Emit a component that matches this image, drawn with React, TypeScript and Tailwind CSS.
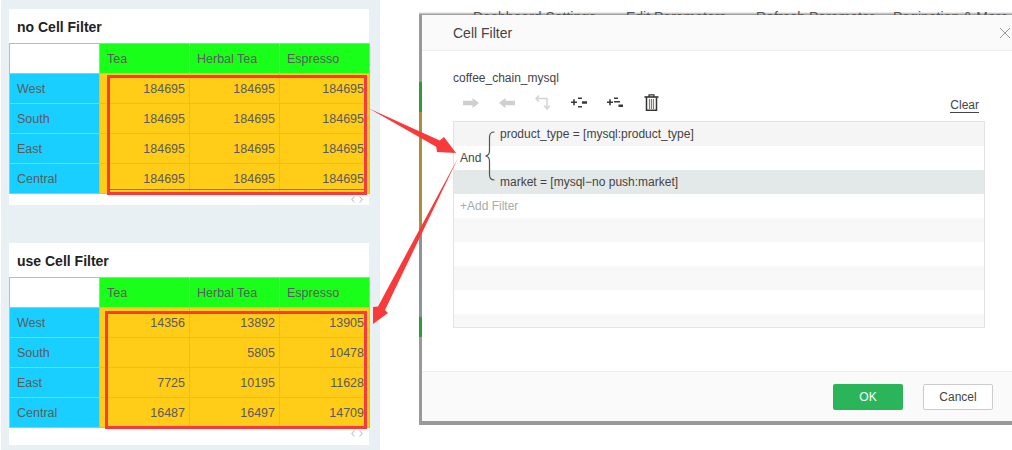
const ff = { font: "font-['Liberation_Sans',Arial,sans-serif]" };

const firstRows = [
  ["West", "184695", "184695", "184695"],
  ["South", "184695", "184695", "184695"],
  ["East", "184695", "184695", "184695"],
  ["Central", "184695", "184695", "184695"],
];

const secondRows = [
  ["West", "14356", "13892", "13905"],
  ["South", "", "5805", "10478"],
  ["East", "7725", "10195", "11628"],
  ["Central", "16487", "16497", "14709"],
];

function ScrollHint() {
  return (
    <svg width="12" height="7" viewBox="0 0 12 7" fill="none" stroke="#b9c4cc" strokeWidth="1.100">
      <path d="M3.500.5.800 3.500l2.700 3M8.500.5l2.700 3-2.700 3" />
    </svg>
  );
}

function DataCard({ title, rows, cardClass }: { title: string; rows: string[][]; cardClass: string }) {
  return (
    <div className={`relative w-[360px] bg-white ${cardClass}`}>
      <div className="h-[34px] pl-2 pt-[10px] text-[14px] leading-4 font-bold text-[#222]">{title}</div>
      <div className="grid w-[361px] grid-cols-[91px_90px_90px_90px] text-[12.5px] text-[#5b5b5b]">
        <div className="h-[31px] border border-[#a9cf8e] bg-white" />
        {["Tea", "Herbal Tea", "Espresso"].map((h) => (
          <div key={h} className="h-[31px] border-y border-r border-[#a9cf8e] bg-[#1aff1a] pl-[7px] leading-[31px]">
            {h}
          </div>
        ))}
        {rows.map((r) => (
          <div key={r[0]} className="contents">
            <div className="h-[30px] border-x border-b border-[#a9cf8e] bg-[#19cfff] pl-[7px] leading-[31px]">{r[0]}</div>
            {r.slice(1).map((v, i) => (
              <div key={i} className="h-[30px] border-r border-b border-[#a9c98e] bg-[#ffcc17] pr-[4px] text-right leading-[31px] last:pr-[5px]">
                {v}
              </div>
            ))}
          </div>
        ))}
      </div>
      <div className="flex justify-end pt-[2px] pr-[6px]">
        <ScrollHint />
      </div>
    </div>
  );
}

function GreyArrow({ flip }: { flip?: boolean }) {
  return (
    <svg width="16" height="10" viewBox="0 0 16 10" className={flip ? "-scale-x-100" : ""}>
      <path d="M0 2.800h9.500V0L16 5l-6.500 5V7.200H0z" fill="#cfcfcf" />
    </svg>
  );
}

function ElbowIcon() {
  return (
    <svg width="16" height="15" viewBox="0 0 16 15" fill="none" stroke="#d2d2d2" strokeWidth="1.400">
      <path d="M4 .5 1 3.500l3 3M1 3.500h11V13M9 10.500l3 3.500 3-3.500" />
    </svg>
  );
}

function IndentIcon({ second }: { second?: boolean }) {
  return (
    <svg width="16" height="11" viewBox="0 0 16 11" fill="#3a3a3a">
      <path d="M0 4.500h2.200V2.300h1.600v2.200H6v1.600H3.800v2.200H2.200V6.100H0z" />
      {second ? (
        <path d="M7 .5h4v1.600H7zM7 4h6v1.600H7zM11.500 7.500H16V10h-4.500z" />
      ) : (
        <path d="M7 .5h4v1.600H7zM11 4.300h5v2.400h-5zM7 9h4v1.600H7z" />
      )}
    </svg>
  );
}

function TrashIcon() {
  return (
    <svg width="16" height="17" viewBox="0 0 16 17" fill="none" stroke="#333" strokeWidth="1.200">
      <path d="M1.500 3h14" strokeWidth="1.600" />
      <path d="M6 3V.8h5V3" />
      <path d="M3.500 3.500v12.800h10V3.500" strokeWidth="1.500" />
      <path d="M6.500 5v10M8.500 5v10M10.500 5v10" stroke="#8b7a6d" strokeWidth="1.200" />
    </svg>
  );
}

function Brace() {
  return (
    <svg width="12" height="50" viewBox="0 0 12 50" fill="none" stroke="#555" strokeWidth="1.200" className="absolute top-[9px] left-[30px]">
      <path d="M10.500 1C7 1 5.500 2.500 5.500 6v14c0 3-1.500 4.500-4 5 2.500.5 4 2 4 5v14c0 3.500 1.500 5 5 5" />
    </svg>
  );
}

function FilterBox() {
  const stripes = ["bg-[#f8f8f8]", "bg-white", "bg-[#f8f8f8]", "bg-white", "bg-[#f8f8f8]"];
  return (
    <div className="relative mr-[27px] ml-[31px] h-[207px] overflow-hidden border border-[#e3e3e3] text-[12px] text-[#444]">
      <div className="h-6 bg-[#f5f5f5] pl-[46px] leading-[25px]">product_type = [mysql:product_type]</div>
      <div className="h-6 bg-white" />
      <div className="h-6 bg-[#e3e8e8] pl-[46px] leading-[25px]">market = [mysql−no push:market]</div>
      <div className="h-6 bg-white pl-[6px] leading-[25px] text-[#aaa]">+Add Filter</div>
      {stripes.map((c, i) => (
        <div key={i} className={`h-6 ${c}`} />
      ))}
      <div className="absolute top-[28px] left-[6px] leading-4">And</div>
      <Brace />
    </div>
  );
}

function CellFilterDialog() {
  return (
    <div className="mt-[10px] ml-[39px] flex h-[415px] w-[593px] flex-col overflow-hidden">
      {/* page behind the dialog, only a few pixels of it show */}
      <div className="relative h-[5px] shrink-0 overflow-hidden bg-gradient-to-b from-white from-40% to-[#8e8e8e] text-[14px] text-[#555]">
        <div className="absolute -top-[3px] left-[54px] flex whitespace-nowrap">
          <span className="w-[153px]">Dashboard Settings</span>
          <span className="w-[130px]">Edit Parameters</span>
          <span className="w-[137px]">Refresh Parameter</span>
          <span>Pagination &amp; More</span>
        </div>
      </div>
      <div className="flex min-h-0 flex-1">
        <div className="flex w-[3px] shrink-0 flex-col bg-[#999]">
          <div className="h-[67px]" />
          <div className="h-[30px] bg-[#2f9a3e]" />
          <div className="h-[123px] bg-[#a88f3c]" />
          <div className="h-[82px] bg-[#8d939a]" />
          <div className="h-5 bg-[#2f9a3e]" />
        </div>
        <div className="flex flex-1 flex-col bg-white">
          <div className="flex h-9 shrink-0 items-center justify-between border-b border-[#eee] bg-[#fafafa] pt-px pl-[31px] text-[14px] text-[#444]">
            <span>Cell Filter</span>
            <svg width="10" height="10" viewBox="0 0 10 10" stroke="#999" strokeWidth="1" className="mr-[2px]">
              <path d="M0 0l10 10M10 0 0 10" />
            </svg>
          </div>
          <div className="min-h-0 flex-1 pt-[19px]">
            <div className="pl-[31px] text-[12px] leading-4 text-[#444]">coffee_chain_mysql</div>
            <div className="mt-[3px] flex h-[27px] items-center gap-[20px] pl-[41px]">
              <GreyArrow />
              <GreyArrow flip />
              <ElbowIcon />
              <IndentIcon />
              <IndentIcon second />
              <TrashIcon />
              <span className="mt-[6px] mr-[33px] ml-auto border-b border-[#444] text-[12px] leading-[14px] text-[#444]">Clear</span>
            </div>
            <div className="mt-[5px]">
              <FilterBox />
            </div>
          </div>
          <div className="flex h-[50px] shrink-0 items-center justify-end gap-5 border-t border-[#eee] bg-[#fafafa] pr-[19px] text-[12px]">
            <button className="h-[26px] w-[70px] rounded-[2px] bg-[#2bb55a] text-white">OK</button>
            <button className="h-[26px] w-[70px] rounded-[2px] border border-[#ccc] bg-white text-[#444]">Cancel</button>
          </div>
          <div className="h-[4px] shrink-0 bg-[#999]" />
        </div>
      </div>
    </div>
  );
}

export default function App() {
  return (
    <div className={`relative flex h-[450px] w-[1012px] overflow-hidden bg-white ${ff.font}`}>
      <div className="ml-px flex h-[450px] w-[379px] shrink-0 flex-col bg-[#e9f0f4] pt-[9px] pl-2">
        <DataCard title="no Cell Filter" rows={firstRows} cardClass="h-[196px]" />
        <div className="mt-[38px]">
          <DataCard title="use Cell Filter" rows={secondRows} cardClass="h-[202px]" />
        </div>
      </div>
      <CellFilterDialog />

      {/* red annotations drawn on top of the screenshot */}
      <div className="absolute top-[75px] left-[107px] h-[120px] w-[260px] border-[3px] border-[#f83a3a]">
        <div className="absolute right-0 bottom-[2px] left-0 h-px bg-[#f83a3a]" />
      </div>
      <div className="absolute top-[311px] left-[105px] h-[118px] w-[262px] border-[3px] border-[#f83a3a]" />
      <svg width="1012" height="450" viewBox="0 0 1012 450" className="absolute top-0 left-0">
        <path d="M369 108.500 439.800 140.400 444 137 456 153 437 152 436.200 146.800z" fill="#f83a3a" />
        <path d="M458 158 385 310 388 313 373 324 373 307 378 306.400z" fill="#f83a3a" />
      </svg>
    </div>
  );
}
